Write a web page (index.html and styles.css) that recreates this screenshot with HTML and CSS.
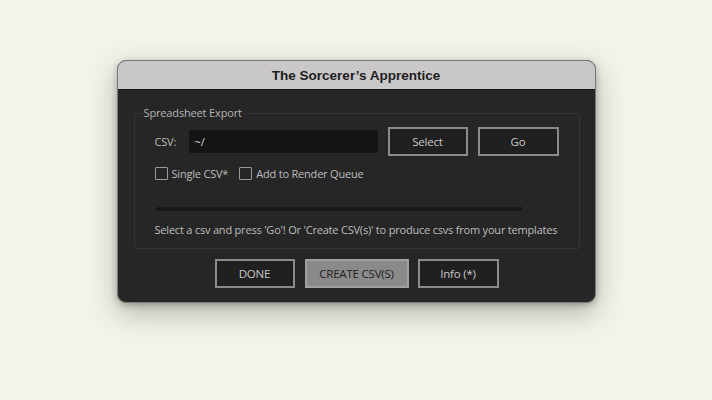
FILE: index.html
```html
<!DOCTYPE html>
<html>
<head>
<meta charset="utf-8">
<link rel="stylesheet" href="styles.css">
</head>
<body>
<div class="stage">
  <div class="window">
    <div class="titlebar">The Sorcerer’s Apprentice</div>
    <div class="content">
      <fieldset class="group">
        <legend class="legend">Spreadsheet Export</legend>
        <div class="row csv-row">
          <span class="label">CSV:</span>
          <div class="input">~/</div>
          <button class="btn">Select</button>
          <button class="btn btn-go">Go</button>
        </div>
        <div class="row check-row">
          <label class="check"><span class="box"></span>Single CSV*</label>
          <label class="check"><span class="box"></span>Add to Render Queue</label>
        </div>
        <div class="progress"></div>
        <div class="status">Select a csv and press 'Go'! Or 'Create CSV(s)' to produce csvs from your templates</div>
      </fieldset>
      <div class="actions">
        <button class="btn">DONE</button>
        <button class="btn btn-primary">CREATE CSV(S)</button>
        <button class="btn btn-info">Info (*)</button>
      </div>
    </div>
  </div>
</div>
</body>
</html>
```
FILE: styles.css
```css
html, body {
  margin: 0;
  padding: 0;
}
body {
  background: #f4f3eb;
  width: 712px;
  height: 400px;
  overflow: hidden;
  font-family: "Open Sans", "Noto Sans", sans-serif;
}
.stage {
  display: flex;
  justify-content: center;
  padding-top: 60px;
}
.window {
  width: 479px;
  height: 243px;
  box-sizing: border-box;
  border: 1px solid #7a7a78;
  border-radius: 9px;
  background: #262626;
  overflow: hidden;
  box-shadow: 0 10px 28px rgba(60, 60, 40, 0.35), 0 2px 6px rgba(0,0,0,0.25);
  display: flex;
  flex-direction: column;
}
.titlebar {
  height: 27px;
  background: #c9c7c8;
  border-bottom: 1px solid #141414;
  display: flex;
  align-items: center;
  justify-content: center;
  font-family: "Liberation Sans", Arial, sans-serif;
  font-weight: bold;
  font-size: 13.5px;
  color: #1e1e1e;
  padding-top: 1px;
  box-sizing: content-box;
}
.content {
  padding: 0 15px 0 16px;
  display: flex;
  flex-direction: column;
}
.group {
  margin: 16px 0 0 0;
  padding: 0 0 0 20px;
  border: 1px solid #353535;
  border-radius: 3px;
  height: 143px;
  box-sizing: border-box;
  display: block;
  min-width: 0;
}
.legend {
  font-size: 11px;
  letter-spacing: -0.15px;
  color: #b4b4b4;
  padding: 0 2px;
  margin-left: -13px;
  line-height: 14px;
}
.row {
  display: flex;
  align-items: center;
}
.csv-row {
  margin-top: 7px;
  height: 29px;
}
.label {
  font-size: 11px;
  letter-spacing: -0.2px;
  color: #bdbdbd;
  width: 34px;
}
.input {
  width: 189px;
  height: 23px;
  box-sizing: border-box;
  background: #141414;
  border-radius: 2px;
  color: #d8d8d8;
  font-size: 11px;
  line-height: 23px;
  padding-left: 6px;
  margin-right: 10px;
}
.btn {
  font-family: "Open Sans", "Noto Sans", sans-serif;
  width: 80px;
  height: 29px;
  box-sizing: border-box;
  background: #202020;
  border: 2px solid #8b8b8b;
  border-radius: 0;
  color: #c8c8c8;
  font-size: 11.5px;
  letter-spacing: -0.2px;
  padding: 0;
  margin: 0;
  display: flex;
  align-items: center;
  justify-content: center;
}
.btn-go {
  width: 81px;
  margin-left: 10px;
}
.check-row {
  margin-top: 10px;
  gap: 0;
}
.check {
  display: flex;
  align-items: center;
  font-size: 11px;
  letter-spacing: -0.2px;
  color: #bdbdbd;
  margin-right: 11px;
}
.box {
  width: 13px;
  height: 13px;
  box-sizing: border-box;
  border: 1.5px solid #9a9a9a;
  border-radius: 1px;
  margin-right: 4px;
}
.progress {
  width: 367px;
  height: 4px;
  background: #181818;
  border-radius: 2px;
  margin-top: 26px;
  margin-left: 1px;
}
.status {
  font-size: 11px;
  letter-spacing: -0.2px;
  color: #bdbdbd;
  margin-top: 11px;
  white-space: nowrap;
}
.actions {
  display: flex;
  justify-content: center;
  gap: 10px;
  margin-top: 10px;
}
.actions .btn-primary {
  width: 104px;
}
.actions .btn-info {
  width: 81px;
  margin-left: -1px;
}
.btn-primary {
  background: #8a8a8a;
  border-color: #a0a0a0;
  color: #1e1e1e;
}
```
